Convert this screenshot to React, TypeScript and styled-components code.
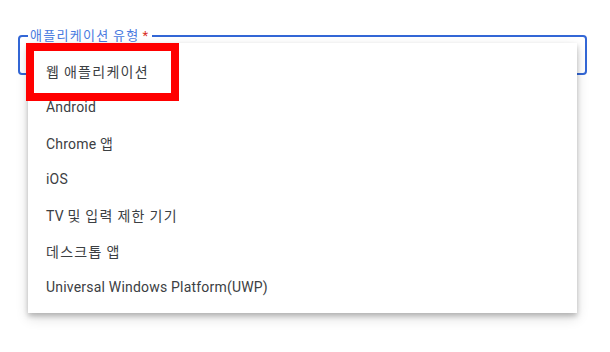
import styled, { createGlobalStyle } from "styled-components";

const options = [
  "웹 애플리케이션",
  "Android",
  "Chrome 앱",
  "iOS",
  "TV 및 입력 제한 기기",
  "데스크톱 앱",
  "Universal Windows Platform(UWP)",
];

// hangul in the screenshot runs a bit wider than the local CJK font
function Text({ children }: { children: string }) {
  return (
    <span>
      {children.split(/([가-힣]+)/).map((part, i) =>
        /[가-힣]/.test(part) ? <Hangul key={i}>{part}</Hangul> : part
      )}
    </span>
  );
}

export default function App() {
  return (
    <>
      <GlobalStyle />
      <Page>
        <Field>
          <Legend>
            <Text>애플리케이션 유형</Text>
            <Star>*</Star>
          </Legend>
        </Field>
        <Menu>
          {options.map((o) => (
            <Item key={o}>
              <Text>{o}</Text>
            </Item>
          ))}
        </Menu>
        <Highlight />
      </Page>
    </>
  );
}

const GlobalStyle = createGlobalStyle`
  body {
    margin: 0;
    background: #fff;
    font-family: Roboto, "Noto Sans CJK KR", sans-serif;
  }
`;

const Page = styled.div`
  position: relative;
  width: 610px;
  height: 352px;
  padding: 28px 23px 0 18px;
  box-sizing: border-box;
`;

const Field = styled.fieldset`
  margin: 0;
  height: 47px;
  box-sizing: border-box;
  border: 2px solid #3367d6;
  border-radius: 4px;
  padding: 0 8px;
`;

const Legend = styled.legend`
  padding: 0 4px 0 2px;
  margin-left: 0;
  font-size: 13px;
  line-height: 16px;
  color: #4a7be0;
  letter-spacing: 0.1px;
`;

const Hangul = styled.span`
  letter-spacing: 1.3px;
`;

const Star = styled.span`
  color: #d93025;
  margin-left: 3px;
`;

const Menu = styled.ul`
  position: absolute;
  left: 28px;
  top: 43px;
  width: 549px;
  margin: 0;
  padding: 10px 0 8px;
  list-style: none;
  background: #fff;
  box-shadow: 0 3px 5px rgba(0, 0, 0, 0.22), 0 5px 12px rgba(0, 0, 0, 0.14);
`;

const Item = styled.li`
  height: 36px;
  display: flex;
  align-items: center;
  padding: 0 18px;
  font-size: 14px;
  letter-spacing: 0.2px;
  color: #3c4043;
`;

const Highlight = styled.div`
  position: absolute;
  left: 26px;
  top: 43px;
  width: 153px;
  height: 58px;
  box-sizing: border-box;
  border: 8px solid #ff0000;
`;
